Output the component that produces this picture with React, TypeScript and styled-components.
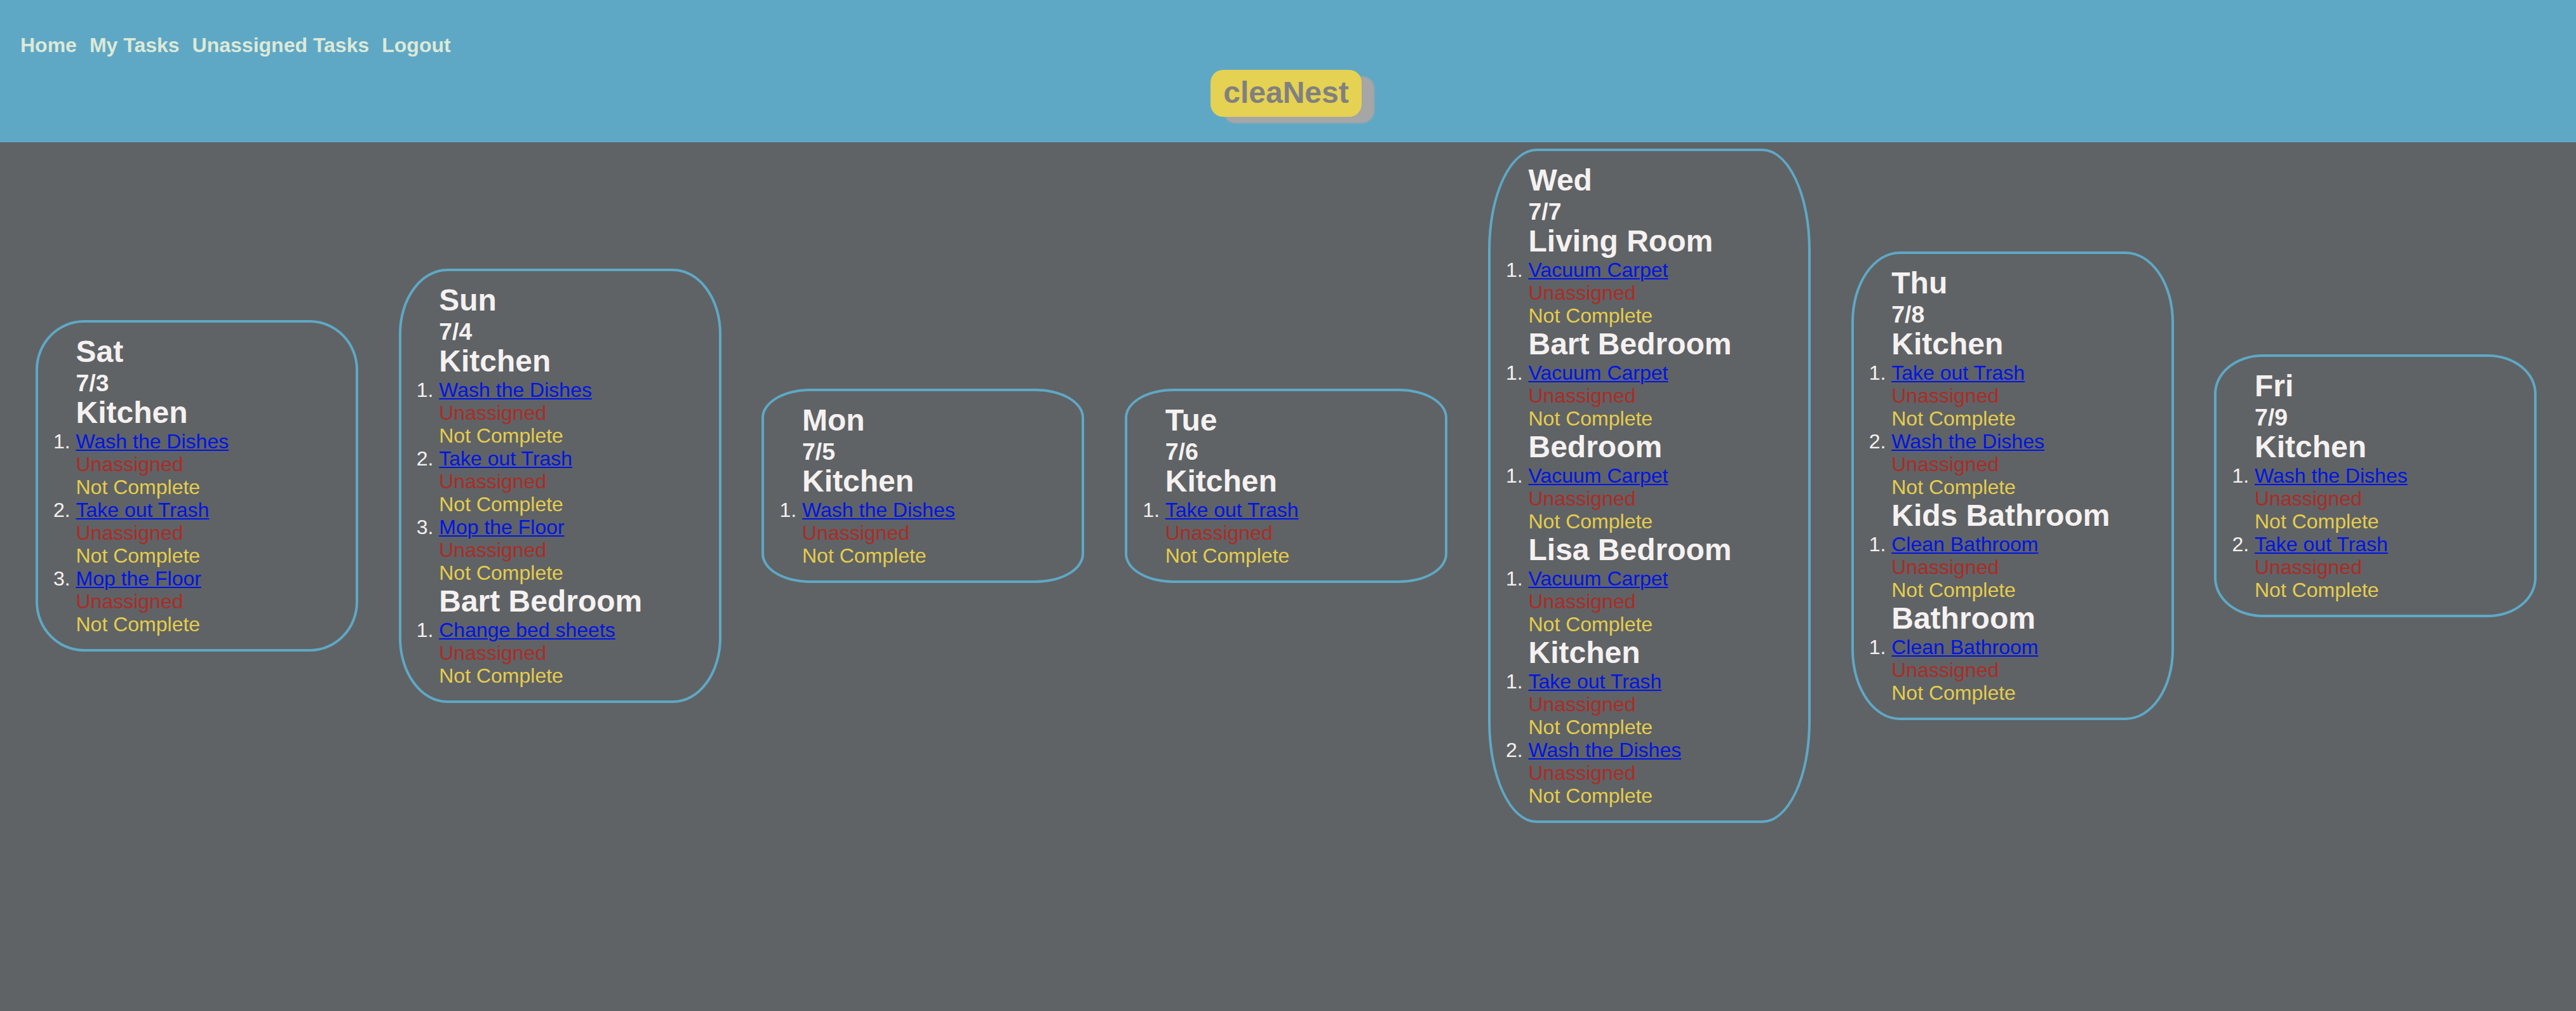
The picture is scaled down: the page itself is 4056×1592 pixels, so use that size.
import React from "react";
import styled, { createGlobalStyle } from "styled-components";

const GlobalStyle = createGlobalStyle`
  * { box-sizing: border-box; margin: 0; padding: 0; }
  body {
    min-height: 100vh;
    background: #5f6366;
    color: #f5f1f0;
    font-family: "Liberation Sans", Helvetica, Arial, sans-serif;
    font-size: 32px;
    line-height: 36px;
  }
`;

const Header = styled.header`
  display: flex;
  flex-direction: column;
  height: 224px;
  padding-top: 53px;
  background: #5fa8c5;
`;

const Nav = styled.nav`
  display: flex;
  gap: 20px;
  padding-left: 32px;
`;

const NavLink = styled.a`
  color: #dde9d7;
  font-weight: bold;
  text-decoration: none;
`;

const Logo = styled.h1`
  align-self: center;
  margin: 21px 6px 0 0;
  padding: 10px 20px 12px;
  border-radius: 20px;
  background: #e5d152;
  box-shadow: 20px 10px 2px #a6a6a6;
  color: #808080;
  font-size: 48px;
  line-height: 52px;
`;

const Week = styled.main`
  display: flex;
  align-items: center;
  gap: 63.75px;
  padding: 10px 0 0 55.9px;
`;

const DayCard = styled.section`
  flex: none;
  width: 508px;
  padding: 20px 20px 20px 59.6px;
  border: 4px solid #5fa8c5;
  border-radius: 15%;
`;

const Heading = styled.h2`
  padding-bottom: 2px;
  font-size: 48px;
  line-height: 52px;
`;

const DayDate = styled.h3`
  font-size: 37.44px;
  line-height: 42px;
`;

const TaskList = styled.ol`
  margin: -1px 0 1px;
  list-style: decimal outside;
`;

const TaskLink = styled.a`
  color: #0014e6;
  text-decoration: underline;
  text-decoration-thickness: 2px;
  text-underline-offset: 2px;
`;

const Status = styled.p<{ $tone: "alert" | "pending" }>`
  color: ${({ $tone }) => ($tone === "alert" ? "#ad2b24" : "#e6cd4b")};
`;

type Room = { name: string; tasks: string[] };
type Day = { name: string; date: string; rooms: Room[] };

const week: Day[] = [
  { name: "Sat", date: "7/3", rooms: [{ name: "Kitchen", tasks: ["Wash the Dishes", "Take out Trash", "Mop the Floor"] }] },
  {
    name: "Sun",
    date: "7/4",
    rooms: [
      { name: "Kitchen", tasks: ["Wash the Dishes", "Take out Trash", "Mop the Floor"] },
      { name: "Bart Bedroom", tasks: ["Change bed sheets"] },
    ],
  },
  { name: "Mon", date: "7/5", rooms: [{ name: "Kitchen", tasks: ["Wash the Dishes"] }] },
  { name: "Tue", date: "7/6", rooms: [{ name: "Kitchen", tasks: ["Take out Trash"] }] },
  {
    name: "Wed",
    date: "7/7",
    rooms: [
      { name: "Living Room", tasks: ["Vacuum Carpet"] },
      { name: "Bart Bedroom", tasks: ["Vacuum Carpet"] },
      { name: "Bedroom", tasks: ["Vacuum Carpet"] },
      { name: "Lisa Bedroom", tasks: ["Vacuum Carpet"] },
      { name: "Kitchen", tasks: ["Take out Trash", "Wash the Dishes"] },
    ],
  },
  {
    name: "Thu",
    date: "7/8",
    rooms: [
      { name: "Kitchen", tasks: ["Take out Trash", "Wash the Dishes"] },
      { name: "Kids Bathroom", tasks: ["Clean Bathroom"] },
      { name: "Bathroom", tasks: ["Clean Bathroom"] },
    ],
  },
  { name: "Fri", date: "7/9", rooms: [{ name: "Kitchen", tasks: ["Wash the Dishes", "Take out Trash"] }] },
];

const links = ["Home", "My Tasks", "Unassigned Tasks", "Logout"];

export default function App() {
  return (
    <>
      <GlobalStyle />
      <Header>
        <Nav>
          {links.map((label) => (
            <NavLink key={label} href="#">{label}</NavLink>
          ))}
        </Nav>
        <Logo>cleaNest</Logo>
      </Header>
      <Week>
        {week.map((day) => (
          <DayCard key={day.name}>
            <Heading>{day.name}</Heading>
            <DayDate>{day.date}</DayDate>
            {day.rooms.map((room) => (
              <React.Fragment key={room.name}>
                <Heading>{room.name}</Heading>
                <TaskList>
                  {room.tasks.map((task) => (
                    <li key={task}>
                      <TaskLink href="#">{task}</TaskLink>
                      <Status $tone="alert">Unassigned</Status>
                      <Status $tone="pending">Not Complete</Status>
                    </li>
                  ))}
                </TaskList>
              </React.Fragment>
            ))}
          </DayCard>
        ))}
      </Week>
    </>
  );
}
